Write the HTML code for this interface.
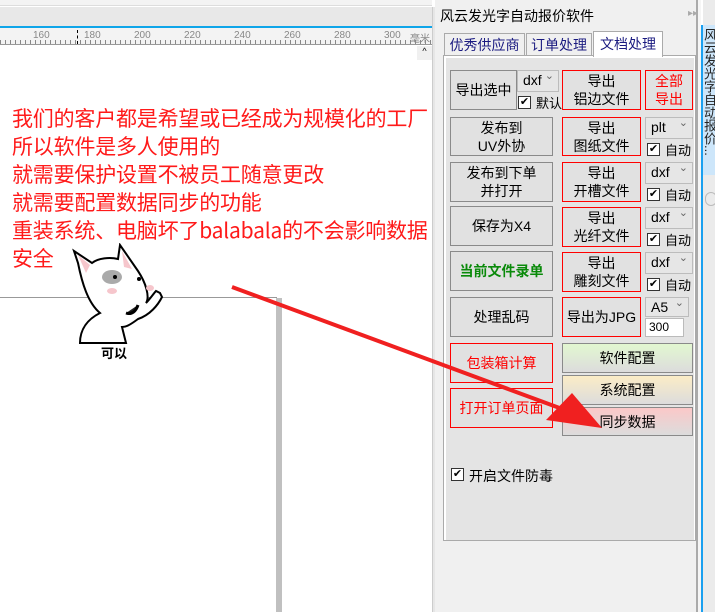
<!DOCTYPE html>
<html><head><meta charset="utf-8"><style>
*{margin:0;padding:0;box-sizing:border-box}
body{width:715px;height:612px;overflow:hidden;background:#fff;position:relative;font-family:"Liberation Sans","Noto Sans CJK SC",sans-serif;font-size:13px;color:#000}
.a{position:absolute}
.btn{position:absolute;background:#e1e1e1;border:1px solid #8a8a8a;display:flex;align-items:center;justify-content:center;text-align:center;line-height:18px;font-size:14px}
.red{border:1px solid #ff0000}
.cb{position:absolute;width:13px;height:13px;border:1px solid #333;background:#fff;font-size:11px;line-height:11px;text-align:center}
.cbl{position:absolute;font-size:13px}
.combo{position:absolute;background:#e6e6e6;border:1px solid #bcbcbc;font-size:14px;padding-left:5px;line-height:19px}
.combo:after{content:"⌄";position:absolute;right:4px;top:-4px;font-size:11px;color:#666}
</style></head><body>
<div class="a" style="left:0;top:0;width:432px;height:6px;background:#f3f3f3;border-bottom:1px solid #ddd"></div>
<div class="a" style="left:0;top:7px;width:432px;height:19px;background:#e8e8e8"></div>
<div class="a" style="left:0;top:26px;width:432px;height:2px;background:#0fa5e9"></div>
<div class="a" style="left:0;top:28px;width:432px;height:17px;background:#f3f3f3;border-bottom:1px solid #999"></div>
<div class="a" style="left:0;top:40px;width:432px;height:4px;background:repeating-linear-gradient(90deg,#888 0 1px,transparent 1px 5px)"></div>
<div class="a" style="top:30px;left:33px;font-size:10px;color:#888">160</div>
<div class="a" style="top:30px;left:84px;font-size:10px;color:#888">180</div>
<div class="a" style="top:30px;left:134px;font-size:10px;color:#888">200</div>
<div class="a" style="top:30px;left:184px;font-size:10px;color:#888">220</div>
<div class="a" style="top:30px;left:234px;font-size:10px;color:#888">240</div>
<div class="a" style="top:30px;left:284px;font-size:10px;color:#888">260</div>
<div class="a" style="top:30px;left:334px;font-size:10px;color:#888">280</div>
<div class="a" style="top:30px;left:384px;font-size:10px;color:#888">300</div>
<div class="a" style="top:30px;left:410px;font-size:10px;color:#888">毫米</div>
<div class="a" style="left:77px;top:30px;width:0;height:14px;border-left:1px dashed #000"></div>
<div class="a" style="left:432px;top:7px;width:3px;height:605px;background:#e6e6e6;border-left:1px solid #ccc"></div>
<div class="a" style="left:417px;top:46px;width:15px;height:14px;background:#f0f0f0;font-size:9px;text-align:center">^</div>
<div class="a" style="left:0;top:297px;width:277px;height:1px;background:#999"></div>
<div class="a" style="left:276px;top:298px;width:6px;height:314px;background:#c0c0c0"></div>
<div class="a" style="left:12px;top:104px;color:#ff1a1a;font-size:21px;line-height:28px;font-family:'Noto Sans CJK SC','Liberation Sans',sans-serif;white-space:nowrap;letter-spacing:-0.2px">我们的客户都是希望或已经成为规模化的工厂<br>所以软件是多人使用的<br>就需要保护设置不被员工随意更改<br>就需要配置数据同步的功能<br>重装系统、电脑坏了balabala的不会影响数据<br>安全</div>
<svg class="a" style="left:70px;top:243px" width="110" height="110" viewBox="0 0 110 110">
<path d="M30 70 C18 60 12 40 8 20 L4 8 L22 20 C28 15 40 14 48 16 L50 2 L68 28 C76 40 80 54 76 60 C80 56 84 50 86 48 L90 50 L92 54 C88 62 80 72 68 76 C60 82 56 84 52 84 L56 100 L10 100 C10 86 18 76 30 70 Z" fill="#fff" stroke="#000" stroke-width="2"/>
<path d="M8 12 L20 22 L16 30 Z" fill="#f6c6cc"/>
<path d="M52 8 L62 26 L54 24 Z" fill="#f6c6cc"/>
<ellipse cx="42" cy="34" rx="10" ry="7" fill="#aaa"/>
<circle cx="45" cy="34" r="2" fill="#000"/><circle cx="69" cy="36" r="2" fill="#000"/>
<ellipse cx="42" cy="48" rx="5" ry="3" fill="#f6c6cc"/><ellipse cx="80" cy="45" rx="4" ry="3" fill="#f6c6cc"/>
<path d="M56 70 C62 72 66 68 68 62" fill="#222" stroke="#000" stroke-width="3"/>
</svg>
<div class="a" style="left:101px;top:343px;font-size:13px;font-weight:bold">可以</div>
<div class="a" style="left:435px;top:0;width:265px;height:612px;background:#f0f0f0"></div>
<div class="a" style="left:440px;top:6px;font-size:14px">风云发光字自动报价软件</div>
<div class="a" style="left:688px;top:8px;font-size:10px;color:#aaa">▸▸</div>
<div class="a" style="left:444px;top:33px;width:81px;height:23px;border:1px solid #aaa;border-bottom:none;background:#f0f0f0;font-size:14px;text-align:center;line-height:22px;color:#1a1a80">优秀供应商</div>
<div class="a" style="left:526px;top:33px;width:66px;height:23px;border:1px solid #aaa;border-bottom:none;background:#f0f0f0;font-size:14px;text-align:center;line-height:22px;color:#1a1a80">订单处理</div>
<div class="a" style="left:593px;top:31px;width:70px;height:26px;border:1px solid #aaa;border-bottom:none;background:#fff;font-size:14px;text-align:center;line-height:24px;color:#1a1a80;z-index:2">文档处理</div>
<div class="a" style="left:443px;top:55px;width:253px;height:486px;border:1px solid #aaa;background:#fff"></div>
<div class="a" style="left:446px;top:58px;width:248px;height:482px;background:#e4e4e4"></div>

<div class="btn" style="left:450px;top:70px;width:67px;height:40px">导出选中</div>
<div class="combo" style="left:517px;top:70px;width:42px;height:22px">dxf</div>
<div class="cb" style="left:518px;top:96px">✔</div><div class="cbl" style="left:536px;top:93px">默认</div>
<div class="btn red" style="left:562px;top:70px;width:79px;height:40px">导出<br>铝边文件</div>
<div class="btn red" style="left:645px;top:70px;width:48px;height:40px;color:#f00">全部<br>导出</div>

<div class="btn" style="left:450px;top:117px;width:103px;height:39px">发布到<br>UV外协</div>
<div class="btn red" style="left:562px;top:117px;width:79px;height:39px">导出<br>图纸文件</div>
<div class="combo" style="left:645px;top:117px;width:48px;height:22px">plt</div>
<div class="cb" style="left:647px;top:143px">✔</div><div class="cbl" style="left:665px;top:140px">自动</div>

<div class="btn" style="left:450px;top:162px;width:103px;height:40px">发布到下单<br>并打开</div>
<div class="btn red" style="left:562px;top:162px;width:79px;height:40px">导出<br>开槽文件</div>
<div class="combo" style="left:645px;top:162px;width:48px;height:22px">dxf</div>
<div class="cb" style="left:647px;top:188px">✔</div><div class="cbl" style="left:665px;top:185px">自动</div>

<div class="btn" style="left:450px;top:206px;width:103px;height:40px">保存为X4</div>
<div class="btn red" style="left:562px;top:207px;width:79px;height:40px">导出<br>光纤文件</div>
<div class="combo" style="left:645px;top:207px;width:48px;height:22px">dxf</div>
<div class="cb" style="left:647px;top:233px">✔</div><div class="cbl" style="left:665px;top:230px">自动</div>

<div class="btn" style="left:450px;top:251px;width:103px;height:40px;color:#0a8a0a;font-weight:bold">当前文件录单</div>
<div class="btn red" style="left:562px;top:252px;width:79px;height:40px">导出<br>雕刻文件</div>
<div class="combo" style="left:645px;top:252px;width:48px;height:22px">dxf</div>
<div class="cb" style="left:647px;top:278px">✔</div><div class="cbl" style="left:665px;top:275px">自动</div>

<div class="btn" style="left:450px;top:297px;width:103px;height:40px">处理乱码</div>
<div class="btn red" style="left:562px;top:297px;width:79px;height:40px">导出为JPG</div>
<div class="combo" style="left:645px;top:297px;width:44px;height:20px">A5</div>
<div class="a" style="left:645px;top:318px;width:39px;height:19px;background:#fff;border:1px solid #bbb;font-size:12px;padding-left:3px;line-height:17px">300</div>

<div class="btn red" style="left:450px;top:343px;width:103px;height:40px;color:#f00">包装箱计算</div>
<div class="btn red" style="left:450px;top:388px;width:103px;height:40px;color:#f00">打开订单页面</div>
<div class="btn" style="left:562px;top:343px;width:131px;height:30px;background:linear-gradient(#e2f7d0,#dcdcdc)">软件配置</div>
<div class="btn" style="left:562px;top:375px;width:131px;height:30px;background:linear-gradient(#fbecc6,#dcdcdc)">系统配置</div>
<div class="btn" style="left:562px;top:407px;width:131px;height:29px;background:linear-gradient(#fbc8c8,#dcdcdc)">同步数据</div>

<div class="cb" style="left:451px;top:468px">✔</div><div class="cbl" style="left:469px;top:466px;font-size:14px">开启文件防毒</div>

<div class="a" style="left:696px;top:0;width:2px;height:612px;background:#aaa"></div>
<div class="a" style="left:698px;top:0;width:3px;height:612px;background:#f5f5f5"></div>
<div class="a" style="left:701px;top:25px;width:2px;height:587px;background:#1aa0f0"></div>
<div class="a" style="left:703px;top:0;width:12px;height:612px;background:#ebebeb"></div>
<div class="a" style="left:703px;top:25px;width:12px;height:150px;background:#cde6fa;overflow:hidden"><div style="font-size:13px;line-height:12px;writing-mode:vertical-rl;color:#222;margin-top:3px">风云发光字自动报价...</div></div>
<div class="a" style="left:705px;top:192px;width:12px;height:14px;border:1px solid #bbb;border-radius:7px"></div>

<svg class="a" style="left:0;top:0;z-index:5" width="715" height="612">
<path d="M232 287 L565 410" stroke="#f02020" stroke-width="4" fill="none"/>
<path d="M602 428 L546 420 L572 393 Z" fill="#f02020"/>
</svg>
</body></html>
